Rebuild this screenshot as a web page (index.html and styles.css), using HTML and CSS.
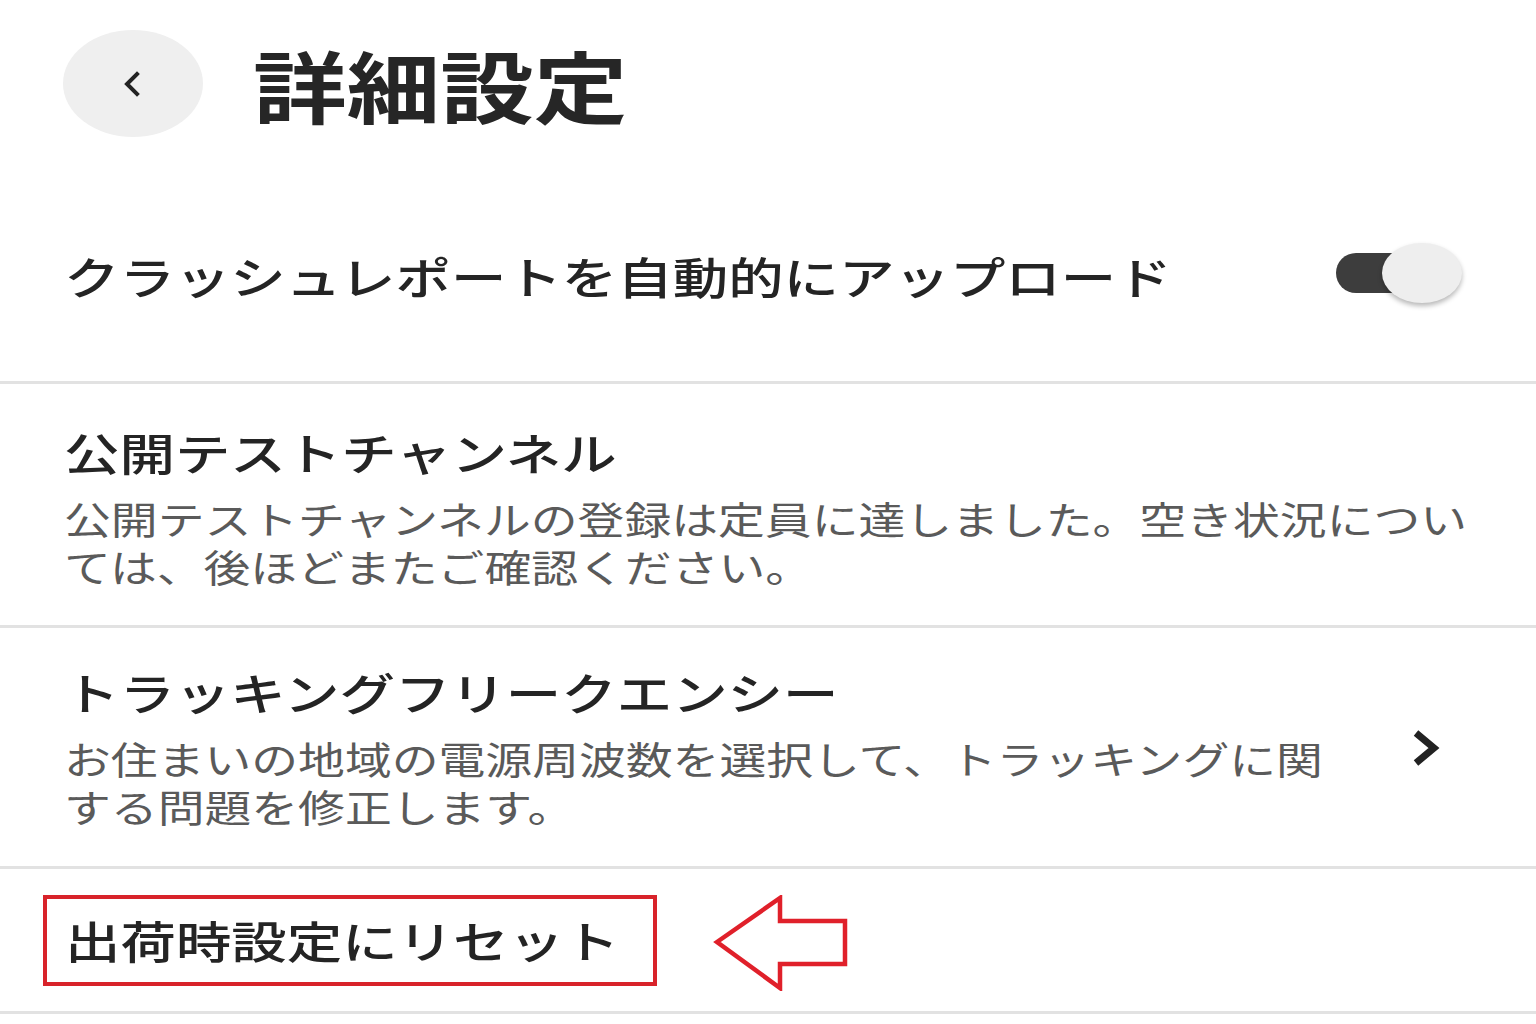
FILE: index.html
```html
<!DOCTYPE html>
<html lang="ja">
<head>
<meta charset="utf-8">
<title>詳細設定</title>
<link rel="stylesheet" href="styles.css">
</head>
<body>
<div class="page">
  <header class="header">
    <button class="back" aria-label="戻る">
      <svg width="22" height="28" viewBox="0 0 22 28"><polyline points="16,4 6,14 16,24" fill="none" stroke="#222" stroke-width="4" stroke-linecap="square" stroke-linejoin="miter"/></svg>
    </button>
    <h1 class="title"><span class="title-text">詳細設定</span></h1>
  </header>

  <section class="row row-toggle">
    <span class="row-title">クラッシュレポートを自動的にアップロード</span>
    <div class="switch">
      <span class="track"></span>
      <span class="thumb"></span>
    </div>
  </section>
  <div class="divider"></div>

  <section class="row row-text row-public">
    <div class="text-block">
      <span class="row-title">公開テストチャンネル</span>
      <div class="row-desc desc-wide">公開テストチャンネルの登録は定員に達しました。空き状況については、後ほどまたご確認ください。</div>
    </div>
  </section>
  <div class="divider"></div>

  <section class="row row-text row-freq">
    <div class="text-block">
      <span class="row-title">トラッキングフリークエンシー</span>
      <div class="row-desc desc-narrow">お住まいの地域の電源周波数を選択して、トラッキングに関する問題を修正します。</div>
    </div>
    <svg class="chev" width="36" height="40" viewBox="0 0 36 40"><polyline points="8,5 26,20 8,35" fill="none" stroke="#222" stroke-width="7" stroke-linecap="butt" stroke-linejoin="miter"/></svg>
  </section>
  <div class="divider"></div>

  <section class="row row-reset">
    <div class="reset-box"><span class="row-title">出荷時設定にリセット</span></div>
    <svg class="arrow" width="136" height="96" viewBox="0 0 136 96"><polygon points="4,47 67,3 67,26 132,26 132,69 67,69 67,93" fill="none" stroke="#e0202a" stroke-width="4.5" stroke-linejoin="miter"/></svg>
  </section>
  <div class="divider"></div>
</div>
</body>
</html>
```

FILE: styles.css
```css
html, body {
  margin: 0;
  padding: 0;
  background: #ffffff;
}

body {
  font-family: "Noto Sans CJK JP", "Noto Sans", sans-serif;
  color: #222222;
}

.page {
  width: 1536px;
}

.header {
  height: 170px;
  box-sizing: border-box;
  padding: 30px 0 0 63px;
  display: flex;
  align-items: flex-start;
}

.back {
  width: 140px;
  height: 107px;
  border: none;
  border-radius: 50%;
  background: #efefef;
  display: flex;
  align-items: center;
  justify-content: center;
  padding: 0;
  margin: 0;
}

.back svg {
  margin-left: -2px;
}

.title {
  margin: 0 0 0 50px;
  height: 107px;
  display: flex;
  align-items: center;
  font-size: 78px;
  font-weight: 700;
  line-height: 80px;
  color: #262626;
}

.title-text {
  display: inline-block;
  transform: scaleX(1.2);
  transform-origin: 0 50%;
}

.row {
  display: flex;
  box-sizing: border-box;
}

.row-title {
  display: inline-block;
  font-size: 44px;
  font-weight: 500;
  line-height: 56px;
  color: #242424;
  white-space: nowrap;
  transform: scaleX(1.26);
  transform-origin: 0 50%;
}

.text-block {
  display: flex;
  flex-direction: column;
  align-items: flex-start;
}

.row-desc {
  margin-top: 14px;
  font-size: 38px;
  font-weight: 400;
  line-height: 48px;
  color: #5a5a5a;
  transform: scaleX(1.232);
  transform-origin: 0 50%;
}

.desc-wide {
  width: 1160px;
}

.desc-narrow {
  width: 1040px;
}

.row-toggle {
  height: 211px;
  padding: 0 74px 0 64px;
  align-items: center;
  justify-content: space-between;
}

.switch {
  display: flex;
  align-items: center;
  margin-top: -6px;
}

.track {
  display: block;
  width: 94px;
  height: 40px;
  border-radius: 20px;
  background: #3d3d3d;
}

.thumb {
  display: block;
  width: 80px;
  height: 60px;
  margin-left: -48px;
  border-radius: 50%;
  background: #eeeeee;
  box-shadow: 0 3px 5px rgba(0, 0, 0, 0.28);
}

.divider {
  height: 3px;
  background: #e2e2e2;
}

.row-text {
  padding-left: 64px;
  align-items: center;
}

.row-public {
  height: 241px;
  padding-top: 4px;
}

.row-freq {
  height: 238px;
  padding-right: 92px;
  justify-content: space-between;
}

.chev {
  flex: 0 0 auto;
  margin-top: 2px;
}

.row-reset {
  height: 142px;
  padding-left: 43px;
  align-items: center;
}

.reset-box {
  width: 614px;
  height: 91px;
  box-sizing: border-box;
  border: 4px solid #d8232a;
  padding-left: 18px;
  display: flex;
  align-items: center;
}

.arrow {
  margin-left: 56px;
  margin-top: 6px;
  flex: 0 0 auto;
}
```
